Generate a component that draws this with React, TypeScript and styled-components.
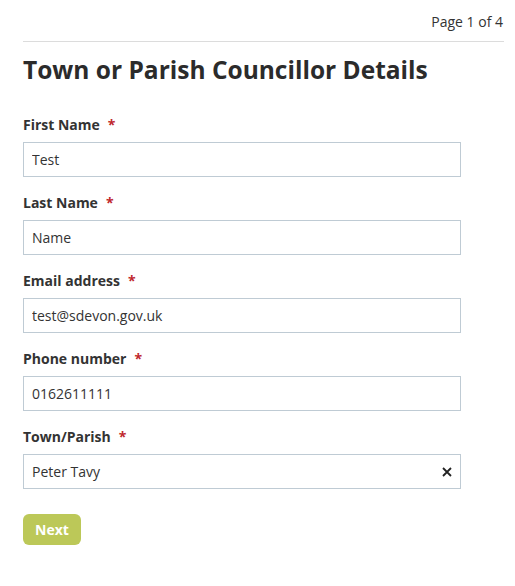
import React from "react";
import styled, { createGlobalStyle } from "styled-components";

const Global = createGlobalStyle`
  html, body { margin: 0; padding: 0; background: #fff; }
  body { font-family: "Open Sans", "Liberation Sans", sans-serif; color: #333; }
  * { box-sizing: border-box; }
`;

const Page = styled.div`
  padding: 0 11px 0 23px;
  width: 515px;
`;

const PageInfo = styled.div`
  display: flex;
  justify-content: flex-end;
  font-size: 14px;
  line-height: 20px;
  padding-top: 12px;
  padding-bottom: 9px;
  padding-right: 1px;
  border-bottom: 1px solid #dcdcdc;
  color: #333;
`;

const Title = styled.h1`
  margin: 12px 0 30px;
  font-size: 24.5px;
  line-height: 32px;
  font-weight: 700;
  color: #2b2b2b;
`;

const Form = styled.form`
  display: flex;
  flex-direction: column;
  gap: 17px;
  width: 438px;
`;

const Field = styled.div`
  display: flex;
  flex-direction: column;
  gap: 8px;
`;

const Label = styled.label`
  font-size: 14px;
  font-weight: 700;
  line-height: 18px;
  color: #333;
`;

const Req = styled.span`
  color: #c0272d;
  margin-left: 8px;
`;

const InputWrap = styled.div`
  position: relative;
`;

const Input = styled.input`
  width: 100%;
  height: 35px;
  border: 1px solid #bfcbd4;
  border-radius: 0;
  padding: 0 8px;
  font-family: "Open Sans", "Liberation Sans", sans-serif;
  font-size: 14px;
  color: #333;
  background: #fff;
  outline: none;
`;

const Clear = styled.span`
  position: absolute;
  right: 9px;
  top: 50%;
  transform: translateY(-50%);
  display: flex;
  align-items: center;
`;

const Next = styled.button`
  margin-top: 8px;
  align-self: flex-start;
  background: #bcc858;
  color: #fff;
  border: none;
  border-radius: 6px;
  height: 31px;
  padding: 0 12px;
  font-family: "Open Sans", "Liberation Sans", sans-serif;
  font-size: 14px;
  font-weight: 700;
  cursor: pointer;
`;

const fields = [
  { label: "First Name", value: "Test" },
  { label: "Last Name", value: "Name" },
  { label: "Email address", value: "test@sdevon.gov.uk" },
  { label: "Phone number", value: "0162611111" },
  { label: "Town/Parish", value: "Peter Tavy", clear: true },
];

export default function App() {
  return (
    <>
      <Global />
      <Page>
        <PageInfo>Page 1 of 4</PageInfo>
        <Title>Town or Parish Councillor Details</Title>
        <Form onSubmit={(e) => e.preventDefault()}>
          {fields.map((f) => (
            <Field key={f.label}>
              <Label>
                {f.label}
                <Req>*</Req>
              </Label>
              <InputWrap>
                <Input defaultValue={f.value} />
                {f.clear && (
                  <Clear>
                    <svg width="10" height="10" viewBox="0 0 10 10">
                      <path d="M1 1L9 9M9 1L1 9" stroke="#222" strokeWidth="1.8" />
                    </svg>
                  </Clear>
                )}
              </InputWrap>
            </Field>
          ))}
          <Next type="submit">Next</Next>
        </Form>
      </Page>
    </>
  );
}
